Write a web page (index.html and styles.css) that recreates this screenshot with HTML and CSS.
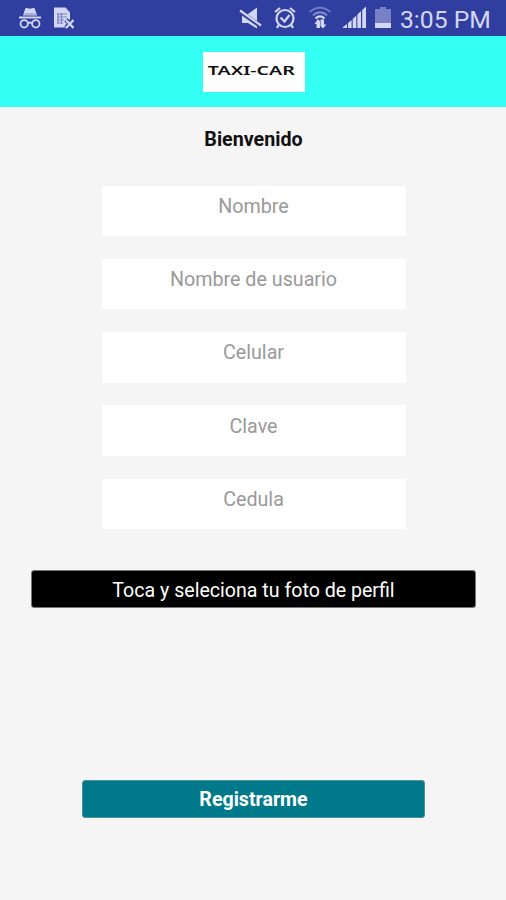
FILE: index.html
```html
<!DOCTYPE html>
<html lang="es">
<head>
  <meta charset="UTF-8" />
  <meta name="viewport" content="width=device-width, initial-scale=1.0"/>
  <title>Taxi-Car - Registro</title>
  <link rel="stylesheet" href="styles.css">
</head>
<body>

<div class="status-bar">
  <div class="status-left">
    <!-- incognito -->
    <svg width="24" height="24" viewBox="0 0 24 24">
      <path d="M5 9.5 7.2 2.8Q7.6 1.6 8.8 2L12 2.8 15.2 2Q16.4 1.6 16.8 2.8L19 9.5Z" fill="currentColor"/>
      <path d="M6.5 8h11" stroke="#7f88cc" stroke-width="1"/>
      <path d="M1 11.5h22" stroke="currentColor" stroke-width="2"/>
      <g fill="none" stroke="currentColor" stroke-width="1.8">
        <circle cx="6.2" cy="17.8" r="3.7"/>
        <circle cx="17.8" cy="17.8" r="3.7"/>
        <path d="M10 17.3q2-1.6 4 0"/>
      </g>
    </svg>
    <!-- file error -->
    <svg width="23" height="24" viewBox="0 0 23 24">
      <path d="M1 1.5h11.5L17 6.5V13l-3.5 8.500H1Z" fill="currentColor"/>
      <path d="M4 8h10M4 11h10M4 14h7M4 17h6M5 7v11M8.5 7v11" stroke="#7b84c4" stroke-width="1.2"/>
      <path d="m13 13.800 7.500 8m0-8-7.500 8" stroke="#303f9f" stroke-width="4.600"/>
      <path d="m13 14 7.500 8m0-8-7.500 8" stroke="currentColor" stroke-width="2.300"/>
    </svg>
  </div>
  <div class="status-right">
    <!-- sound off -->
    <svg width="24" height="24" viewBox="0 0 24 24">
      <path d="M4 8h6l9-6.500v21L10 17H4Z" fill="currentColor"/>
      <path d="m2 5.500 21 15" stroke="#303f9f" stroke-width="4.200"/>
      <path d="m2 4.500 21 15" stroke="currentColor" stroke-width="2.200"/>
    </svg>
    <!-- alarm -->
    <svg width="24" height="24" viewBox="0 0 24 24" fill="none" stroke="currentColor" stroke-width="2.2">
      <circle cx="12" cy="12.5" r="8.5"/>
      <path d="m2 6 5-4M22 6l-5-4M5.500 19 4 22m14.500-3 1.500 3M7.500 11.500l4 4 5-6.500"/>
    </svg>
    <!-- wifi -->
    <svg width="24" height="24" viewBox="0 0 24 24" fill="none">
      <path d="M1.500 6Q12-2.500 22.500 6" stroke="#6f79c0" stroke-width="1.800"/>
      <path d="M5 9.200q7-5.800 14 0" stroke="#8991d0" stroke-width="2"/>
      <path d="M7.500 12.500q4.500-4.200 9 0" stroke="currentColor" stroke-width="2.300"/>
      <path d="m6.500 18 3.500-5 2 2.500V22H8.500v-4ZM12.500 13.500H16v5h2.500l-3.500 4-2.500-2.500Z" fill="currentColor"/>
    </svg>
    <!-- signal -->
    <svg width="24" height="24" viewBox="0 0 24 24" fill="currentColor">
      <path d="M0 22v-1l4-3v4ZM5 22v-5L8.600 14v8ZM9.700 22v-9l3.600-3.500V22ZM14.400 22V8.500L18 5v17ZM19.200 22V4L23 .5V22Z"/>
    </svg>
    <!-- battery -->
    <svg class="battery" width="16" height="24" viewBox="0 0 16 24">
      <path d="M5 1h6v2h5v19H0V3h5Z" fill="#7780c5"/>
      <path d="M0 17h16v5H0Z" fill="currentColor"/>
    </svg>
    <span class="clock">3:05 PM</span>
  </div>
</div>

<header>
  <svg class="logo" width="102" height="40" viewBox="0 0 102 40">
    <rect width="102" height="40" fill="#fff"/>
    <text x="4.8" y="23" textLength="87" lengthAdjust="spacingAndGlyphs">TAXI-CAR</text>
  </svg>
</header>

<form class="register">
  <h1>Bienvenido</h1>
  <div class="fields">
    <input type="text" placeholder="Nombre">
    <input type="text" placeholder="Nombre de usuario">
    <input type="tel" placeholder="Celular">
    <input type="password" placeholder="Clave">
    <input type="text" placeholder="Cedula">
  </div>
  <button type="button" class="btn btn-photo">Toca y seleciona tu foto de perfil</button>
  <button type="button" class="btn btn-register">Registrarme</button>
</form>

</body>
</html>
```

FILE: styles.css
```css
* {
  box-sizing: border-box;
}

body {
  font-family: Roboto, sans-serif;
  margin: 0;
  min-height: 900px;
  background: #f5f5f5;
  color: #111;
}

.status-bar {
  display: flex;
  justify-content: space-between;
  height: 36px;
  padding: 6px 16px 0 18px;
  background: #303f9f;
  color: #d3d7f3;
}

.status-left {
  display: flex;
  gap: 11px;
}

.status-right {
  display: flex;
  gap: 11px;
}

.status-right svg {
  flex: none;
}

.battery {
  margin-left: -3px;
}

.clock {
  width: 90px;
  margin-left: -2px;
  font-size: 24.7px;
  line-height: 28px;
  white-space: nowrap;
}

header {
  display: flex;
  justify-content: center;
  height: 71px;
  padding: 16px 0 0 1px;
  background: #33fff3;
}

.logo text {
  font-family: "Noto Sans", sans-serif;
  font-size: 13px;
  font-weight: 600;
  fill: #111;
}

.register {
  display: flex;
  flex-direction: column;
  align-items: center;
  padding-left: 1px;
}

.register h1 {
  margin: 20px 0 0;
  font-size: 19.7px;
  font-weight: 700;
  line-height: 25px;
}

.fields {
  display: flex;
  flex-direction: column;
  gap: 22.8px;
  margin-top: 33.5px;
}

.fields input {
  width: 304px;
  height: 50.5px;
  padding: 0 0 9px;
  border: none;
  border-radius: 1px;
  background: #fff;
  font-family: inherit;
  font-size: 19.7px;
  text-align: center;
}

.fields input::placeholder {
  color: #999;
}

.btn {
  height: 38px;
  padding: 2px 0 0;
  border: 1px solid #777;
  border-radius: 3px;
  color: #fff;
  font-family: inherit;
  font-size: 19.6px;
}

.btn-photo {
  width: 445px;
  margin-top: 41px;
  background: #000;
}

.btn-register {
  width: 343px;
  margin-top: 171.5px;
  border-color: #4f929c;
  background: #007a8a;
  font-weight: 700;
}
```
